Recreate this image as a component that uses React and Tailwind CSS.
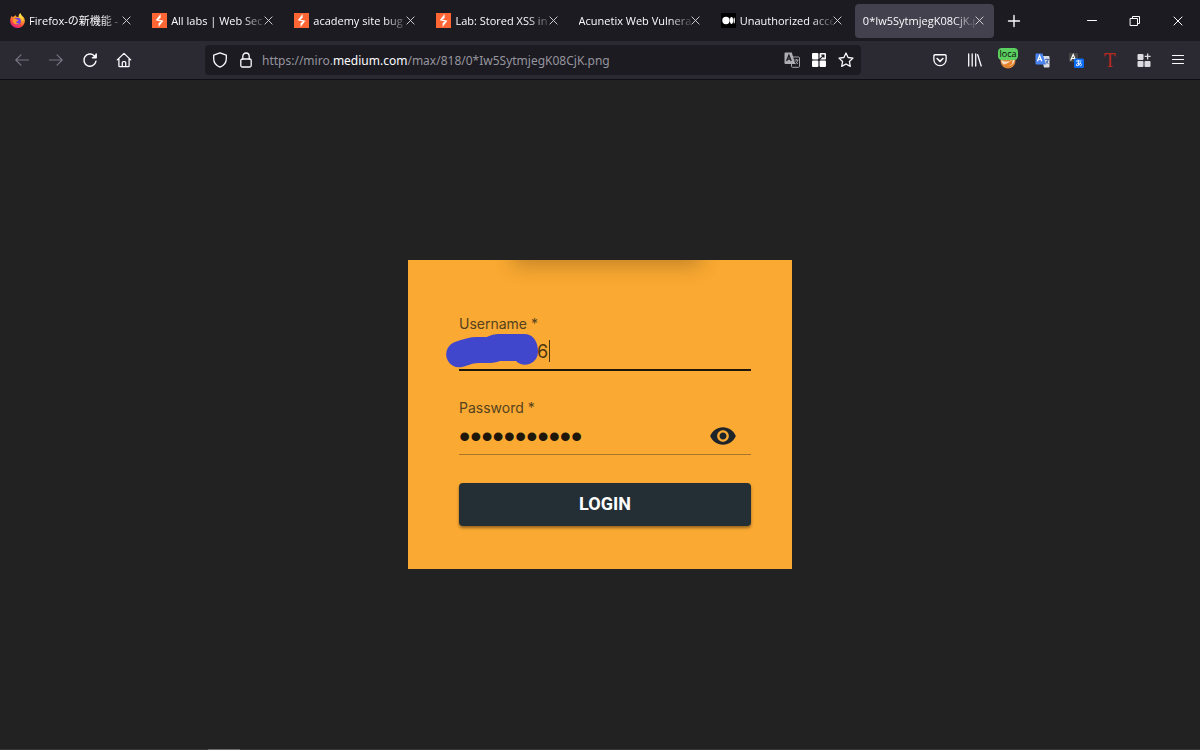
import { useState } from 'react'

const TABS = [
  { icon: 'firefox', title: 'Firefox-の新機能 -' },
  { icon: 'burp', title: 'All labs | Web Sec' },
  { icon: 'burp', title: 'academy site bug' },
  { icon: 'burp', title: 'Lab: Stored XSS in' },
  { icon: null, title: 'Acunetix Web Vulnera' },
  { icon: 'medium', title: 'Unauthorized acce' },
  { icon: null, title: '0*Iw5SytmjegK08CjK.p' },
]

function FirefoxIcon() {
  return (
    <svg className="w-[15px] h-[15px] shrink-0" viewBox="0 0 16 16">
      <defs>
        <linearGradient id="fx" x1="0.8" y1="0" x2="0.3" y2="1">
          <stop offset="0" stopColor="#fff14a" />
          <stop offset="0.35" stopColor="#ffa52a" />
          <stop offset="0.7" stopColor="#ff4a3d" />
          <stop offset="1" stopColor="#e3168a" />
        </linearGradient>
      </defs>
      <path d="M1.6 3.2C2.2 3.6 2.7 4 3 4.4 3.6 3.8 4.2 3.5 5 3.3L6 2.2C6 3 6.3 3.6 7 4l2.3.2C9 2.4 9.8.8 11.3 0c.1 1.7 1.4 2.4 2.4 3.7C15.3 5.2 16 7 15.8 9 15.3 13 12 16 8 16S.3 12.8.2 8.6C.1 6.6.7 4.8 1.6 3.2z" fill="url(#fx)" />
      <circle cx="7.9" cy="8.7" r="3.7" fill="#7542e5" />
      <path d="M3.2 6.5c1.8-.9 3.5-.5 4.3.7 1 .1 1.5.3 1.4.8-.4.8-1.8.8-2.3 1.5-.2 1.4 1.5 2 3.3 1.1-1 1.9-5.4 2.2-6.6-.7-.3-.9-.4-2.3-.1-3.4z" fill="#ff9a2c" />
      <path d="M9.5 4.2c2.3.8 3.5 2.7 3.1 5 1-.8 1.2-3 .3-4.5-.8-1-1.6-2-1.7-3.5-1.2.6-1.8 1.8-1.7 3z" fill="#ffe044" />
    </svg>
  )
}

function BurpIcon() {
  return (
    <svg className="w-[15px] h-[15px] shrink-0" viewBox="0 0 15 15">
      <rect width="15" height="15" fill="#ff6633" />
      <path d="M8.6 1v4L6.2 6.4l5.2 1.4L6.6 14v-3.900L9 8.600 3.700 7.200z" fill="#fff" />
    </svg>
  )
}

function MediumIcon() {
  return (
    <svg className="w-[15px] h-[15px] shrink-0" viewBox="0 0 15 15">
      <rect width="15" height="15" rx="1" fill="#000" />
      <circle cx="5" cy="7.5" r="3.7" fill="#fff" />
      <ellipse cx="10.5" cy="7.5" rx="1.6" ry="3.4" fill="#fff" />
      <ellipse cx="13.2" cy="7.5" rx=".7" ry="3" fill="#fff" />
    </svg>
  )
}

function CloseIcon({ className }) {
  return (
    <svg className={className} viewBox="0 0 10 10" fill="none" stroke="currentColor" strokeWidth="1">
      <path d="M.7.7l8.6 8.6M9.3.7L.7 9.3" />
    </svg>
  )
}

function Tab({ tab, active, onSelect }) {
  return (
    <div
      className={
        active
          ? 'flex flex-1 min-w-0 h-[34px] items-center rounded bg-[#42414d] pl-2 pr-[10px]'
          : 'flex flex-1 min-w-0 h-[34px] items-center rounded pl-2 pr-[10px]'
      }
    >
      <button type="button" onClick={onSelect} className="flex flex-1 min-w-0 items-center gap-1 text-left">
        {tab.icon === 'firefox' && <FirefoxIcon />}
        {tab.icon === 'burp' && <BurpIcon />}
        {tab.icon === 'medium' && <MediumIcon />}
        <span className="flex-1 min-w-0 overflow-hidden whitespace-nowrap text-[11px] leading-4 text-[#fbfbfe] [mask-image:linear-gradient(to_left,rgba(0,0,0,0.15),black_22px)]">
          {tab.title}
        </span>
      </button>
      <button type="button" aria-label="Close tab" className="text-[#dcdce2]">
        <CloseIcon className="w-[9px] h-[9px]" />
      </button>
    </div>
  )
}

function ToolButton({ label, disabled, children }) {
  return (
    <button
      type="button"
      aria-label={label}
      disabled={disabled}
      className="flex w-[34px] h-[30px] shrink-0 items-center justify-center text-[#fbfbfe] disabled:text-[#76757e]"
    >
      {children}
    </button>
  )
}

// 16px stroke icon used all over the toolbar
function Line({ children, width = 1.3 }) {
  return (
    <svg
      className="w-4 h-4 shrink-0"
      viewBox="0 0 16 16"
      fill="none"
      stroke="currentColor"
      strokeWidth={width}
      strokeLinecap="round"
      strokeLinejoin="round"
    >
      {children}
    </svg>
  )
}

function UrlBar() {
  return (
    <div className="ml-16 mr-[62px] flex h-[30px] min-w-0 flex-1 items-center rounded bg-[#1c1b22] px-[7px] text-[#fbfbfe]">
      <button type="button" aria-label="Tracking protection" className="mr-[10px]">
        <Line>
          <path d="M8 .9l6.3 2.3v3.5c0 4-2.7 7-6.3 8.5-3.6-1.5-6.3-4.5-6.3-8.5V3.2z" />
        </Line>
      </button>
      <button type="button" aria-label="Site information" className="mr-2">
        <Line>
          <rect x="2.8" y="7" width="10.4" height="8" rx="1.5" />
          <path d="M4.8 7V4.2a3.2 3.2 0 0 1 6.4 0V7" />
        </Line>
      </button>
      <p className="flex-1 min-w-0 overflow-hidden whitespace-nowrap pt-[2px] font-['Noto_Sans',sans-serif] text-xs leading-5 text-[#96959d]">
        https://miro.<span className="text-[#fbfbfe]">medium.com</span>/max/818/0*Iw5SytmjegK08CjK.png
      </p>
      <div className="flex items-center gap-[11px]">
        <button type="button" aria-label="Translate">
          <svg className="w-4 h-4" viewBox="0 0 16 16">
            <rect x="7.5" y="5" width="8" height="10.3" rx="1" fill="none" stroke="#a5a4aa" />
            <path d="M1.5.5h6.3L11.3 12H1.5a1 1 0 0 1-1-1V1.5a1 1 0 0 1 1-1z" fill="#aeadb3" />
            <path d="M2.6 9L4.9 3.2 7.2 9M3.5 7.1h2.8" fill="none" stroke="#1c1b22" strokeWidth="1.3" />
            <path d="M10.5 8h4M12.5 7v1M13.8 8c-.3 1.6-1.3 3-2.5 4M11.8 9.5l1.9 2.5" fill="none" stroke="#a5a4aa" />
          </svg>
        </button>
        <button type="button" aria-label="Open in split view">
          <svg className="w-4 h-4" viewBox="0 0 16 16" fill="#fff">
            <rect x="1" y="1" width="6.4" height="6.4" rx="1" />
            <rect x="1" y="8.6" width="6.4" height="6.4" rx="1" />
            <rect x="8.6" y="8.6" width="6.4" height="6.4" rx="1" />
            <rect x="8.6" y="1" width="6.4" height="6.4" rx="1" />
            <path d="M8.6 7.400l4-4M10.300 3.100h2.600v2.600" fill="none" stroke="#1c1b22" strokeWidth="1.200" />
          </svg>
        </button>
        <button type="button" aria-label="Bookmark this page">
          <Line>
            <path d="M8 1l2.1 4.5 4.9.6-3.6 3.4.9 4.9L8 12l-4.3 2.4.9-4.9L1 6.1l4.9-.6z" />
          </Line>
        </button>
      </div>
    </div>
  )
}

function Toolbar() {
  return (
    <nav className="flex h-[39px] items-center border-b border-[#0f0e13] bg-[#2b2a33] px-[5px]">
      <ToolButton label="Back" disabled>
        <Line width={1.2}><path d="M14.5 8H2M7 2.8L1.8 8 7 13.2" /></Line>
      </ToolButton>
      <ToolButton label="Forward" disabled>
        <Line width={1.2}><path d="M1.5 8H14M9 2.8L14.2 8 9 13.2" /></Line>
      </ToolButton>
      <ToolButton label="Reload">
        <Line width={1.4}>
          <path d="M14 9.2A6.1 6.1 0 1 1 12.2 3.7l1.2 1.1" />
          <path d="M14.2 1.8v4h-4z" fill="currentColor" stroke="none" />
          <path d="M14.2 2v3.7h-3.7" />
        </Line>
      </ToolButton>
      <ToolButton label="Home">
        <Line>
          <path d="M1.3 7.9L8 1.4l6.7 6.5M2.9 6.8v7.1c0 .5.3.8.8.8h8.6c.5 0 .8-.3.8-.8V6.8M6.3 14.5V10.6a1 1 0 0 1 1-1h1.4a1 1 0 0 1 1 1v3.9" />
        </Line>
      </ToolButton>

      <UrlBar />

      <ToolButton label="Pocket">
        <svg className="w-[14px] h-[14px]" viewBox="0 0 16 16" fill="none" stroke="currentColor" strokeWidth="1.5" strokeLinecap="round" strokeLinejoin="round">
          <path d="M2.3 2h11.4a1.3 1.3 0 0 1 1.3 1.3V7.5a7 7 0 0 1-14 0V3.3A1.3 1.3 0 0 1 2.3 2z" />
          <path d="M4.7 6.3L8 9.5l3.3-3.2" strokeWidth="1.9" />
        </svg>
      </ToolButton>
      <ToolButton label="Library">
        <Line width={1.3}><path d="M2.7 2v12M6.2 2v12M9.7 2v12M11.7 2.7L15.2 14" /></Line>
      </ToolButton>
      <ToolButton label="FoxyProxy">
        <span className="relative flex h-[18px] w-5 items-end justify-center">
          <svg className="w-4 h-4" viewBox="0 0 16 16">
            <circle cx="8" cy="8" r="7.5" fill="#dd8437" />
            <path d="M1 7c2 .5 3.5 2 6 1.5 3 .2 5-2 8-3.5-.5 5-3 8-7 8C5 13 2 11 1 7z" fill="#f7dfc4" />
            <path d="M3 12l5-2 5-4-1 5-4 3z" fill="#e8832c" />
          </svg>
          <span className="absolute -top-[3px] left-0 h-3 w-5 rounded-sm bg-[#5bcf5f] text-center text-[9px] leading-3 font-medium text-[#0b0b0b]">
            loca
          </span>
        </span>
      </ToolButton>
      <ToolButton label="Google Translate">
        <svg className="w-[15px] h-[15px]" viewBox="0 0 15 15">
          <path d="M6 3h7.5a1 1 0 0 1 1 1v9.5a1 1 0 0 1-1 1H9z" fill="#dadce3" />
          <path d="M1.5.5h6l3.5 11H1.5a1 1 0 0 1-1-1v-9a1 1 0 0 1 1-1z" fill="#4a84f0" />
          <path d="M2.4 8.3l2.2-5.6 2.2 5.6M3.2 6.5H6" fill="none" stroke="#fff" strokeWidth="1.2" />
          <path d="M10 6.5h4M12 5.5v1M13.2 6.7c-.3 1.7-1.2 3-2.4 4M11 8l2.3 3" fill="none" stroke="#4c6fae" />
        </svg>
      </ToolButton>
      <ToolButton label="Translate page">
        <svg className="w-[15px] h-[15px]" viewBox="0 0 15 15">
          <rect x="0" y="0" width="9" height="9" rx="1" fill="#454545" />
          <path d="M1.6 7.5l2.6-6 2.6 6M2.5 5.5h3.4" fill="none" stroke="#fff" strokeWidth="1.2" />
          <rect x="5" y="5.5" width="10" height="9.5" rx="1.5" fill="#0a6cf5" />
          <path d="M7 8h5.5M9.3 6.7c-.2 2 0 4.2.6 6M11.7 9.3c-.6 2-2 3.5-3.6 3.5-1.3 0-.9-2.5 1.7-2.7 2.8-.2 3.6 2 1.3 3" fill="none" stroke="#fff" strokeWidth=".9" />
        </svg>
      </ToolButton>
      <ToolButton label="Text tool">
        <svg className="h-4 w-3" viewBox="0 0 12 16">
          <path d="M.5 1h11l.3 3.5h-.8C10.7 2.7 10 2.2 8 2.2h-.8v10.6c0 1.3.4 1.5 1.6 1.7v.5H3.7v-.5c1.2-.2 1.6-.4 1.6-1.7V2.2H4C2 2.2 1.3 2.7 1 4.5H.2z" fill="#b52a20" />
        </svg>
      </ToolButton>
      <ToolButton label="Extensions">
        <svg className="w-4 h-4" viewBox="0 0 16 16" fill="#dcdce0">
          <rect x="1.5" y="2" width="6" height="6" rx="1" />
          <rect x="1.5" y="9" width="6" height="6" rx="1" />
          <rect x="8.5" y="9" width="6" height="6" rx="1" />
          <path d="M11 1.5h1.3v2.3h2.3v1.3h-2.3v2.3H11V5.1H8.7V3.8H11z" />
        </svg>
      </ToolButton>
      <ToolButton label="Menu">
        <Line width={1.2}><path d="M2.5 3.5h11M2.5 7.5h11M2.5 11.5h11" /></Line>
      </ToolButton>
    </nav>
  )
}

function LoginCard() {
  const [username, setUsername] = useState('6')
  const [password, setPassword] = useState('hunter2hunt')

  return (
    <form
      onSubmit={(e) => e.preventDefault()}
      className="relative w-96 overflow-hidden bg-[#faa932] pt-[52px] pr-[41px] pb-[43px] pl-[51px] font-[Inter,sans-serif]"
    >
      {/* shadow of the logo plate that sits above the card */}
      <div className="absolute -top-5 left-[108px] h-5 w-[182px] shadow-[0_2px_20px_3px_rgba(60,40,10,0.3)]" />

      <label htmlFor="username" className="block h-6 text-sm leading-6 text-[#54421f]">
        Username *
      </label>
      <div className="relative">
        <input
          id="username"
          type="text"
          value={username}
          onChange={(e) => setUsername(e.target.value)}
          className="block h-[35px] w-full border-b-2 border-[#20170b] bg-transparent pb-[2px] pl-[78px] text-lg text-[#4a3613] outline-none"
        />
        <svg className="pointer-events-none absolute -top-1 -left-[15px] h-9 w-24" viewBox="0 0 96 36" fill="#4047cc">
          <path d="M11 10C19 7 26 5 33 5H43C47 3 50 2 56 2H80C89 2 94 9 94 20A13 13 0 0 1 72 29H56C50 31 47 31 43 31H34C28 31 23 34 18 35A13 13 0 0 1 11 10z" />
        </svg>
        <span className="absolute top-1 left-[90px] h-[22px] w-px bg-[#4a3613]" />
      </div>

      <label htmlFor="password" className="mt-[25px] block h-6 text-sm leading-6 text-[#54421f]">
        Password *
      </label>
      <div className="flex h-[35px] items-center border-b border-[#a9752a] pr-[14px] pb-[2px]">
        <input
          id="password"
          type="password"
          value={password}
          onChange={(e) => setPassword(e.target.value)}
          className="h-8 min-w-0 flex-1 bg-transparent font-['Liberation_Sans',sans-serif] text-[32px] leading-8 text-[#20170b] outline-none"
        />
        <button type="button" aria-label="Show password">
          <svg className="h-7 w-7" viewBox="0 0 24 24" fill="#1d252b">
            <path d="M12 4.5C7 4.5 2.73 7.61 1 12c1.73 4.39 6 7.5 11 7.5s9.27-3.11 11-7.5c-1.73-4.39-6-7.5-11-7.5zM12 17c-2.76 0-5-2.24-5-5s2.24-5 5-5 5 2.24 5 5-2.24 5-5 5zm0-8c-1.66 0-3 1.34-3 3s1.34 3 3 3 3-1.34 3-3-1.34-3-3-3z" />
          </svg>
        </button>
      </div>

      <button
        type="submit"
        className="mt-7 h-[43px] w-full rounded bg-[#242f35] pb-[2px] font-[Roboto,sans-serif] text-lg font-bold text-white shadow-[0_2px_3px_rgba(0,0,0,0.4)]"
      >
        LOGIN
      </button>
    </form>
  )
}

export default function App() {
  const [current, setCurrent] = useState(6)

  return (
    <div className="flex h-screen flex-col bg-[#222222] font-['Open_Sans','Noto_Sans_CJK_JP',sans-serif]">
      <header>
        <div className="flex h-[41px] items-center bg-[#1c1b22] pr-px">
          <div className="flex min-w-0 flex-1 gap-[3px] pl-[2px]">
            {TABS.map((tab, i) => (
              <Tab key={tab.title} tab={tab} active={i === current} onSelect={() => setCurrent(i)} />
            ))}
          </div>
          <button type="button" aria-label="New tab" className="flex w-10 justify-center text-[#fbfbfe]">
            <Line width={1.4}><path d="M8 2.5v11M2.5 8h11" /></Line>
          </button>
          <div className="ml-9 flex text-[#fbfbfe]">
            <button type="button" aria-label="Minimize" className="flex w-[43px] justify-center">
              <Line width={1}><path d="M3.5 7.5h9" /></Line>
            </button>
            <button type="button" aria-label="Restore" className="flex w-[43px] justify-center">
              <Line width={1}><path d="M3.5 5.5h7v7h-7zM5.5 5.5v-2h7v7h-2" /></Line>
            </button>
            <button type="button" aria-label="Close" className="flex w-[43px] items-center justify-center">
              <CloseIcon className="w-[10px] h-[10px]" />
            </button>
          </div>
        </div>
        <Toolbar />
      </header>

      <main className="flex flex-1 items-center justify-center">
        <LoginCard />
      </main>

      <footer className="h-px bg-[#39343a]">
        <div className="ml-52 h-px w-8 bg-[#6b686b]" />
      </footer>
    </div>
  )
}
